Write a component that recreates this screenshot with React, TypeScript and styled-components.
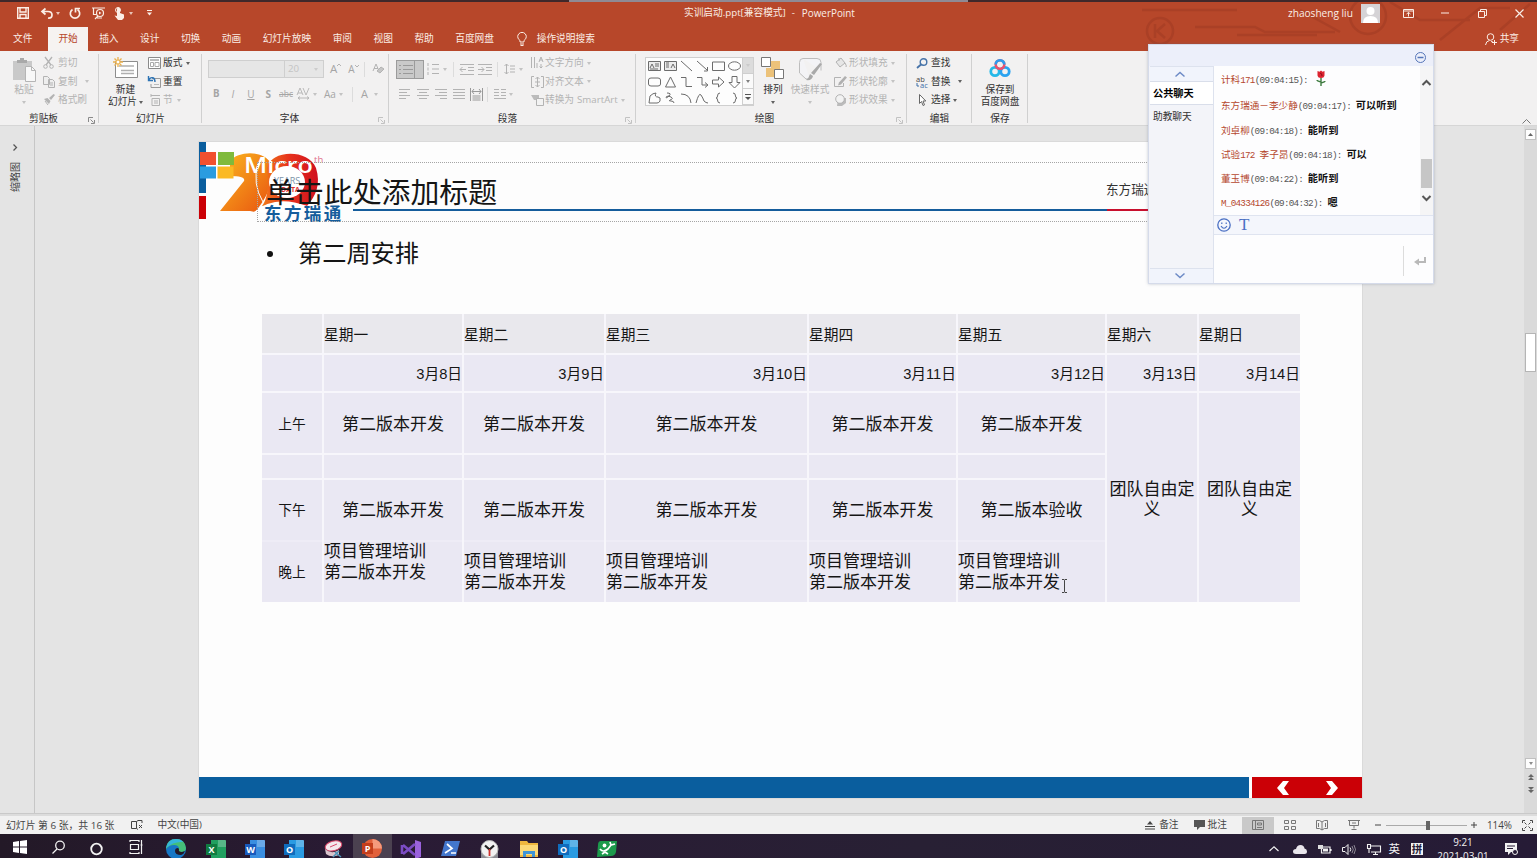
import React from "react";
import styled, { createGlobalStyle, css } from "styled-components";

const UI = `"Open Sans", "Noto Sans CJK SC", sans-serif`;

const Global = createGlobalStyle`
  * { box-sizing: border-box; }
  html, body { margin: 0; padding: 0; overflow: hidden; }
  body { font-family: ${UI}; font-size: 9.7px; color: #262626; }
`;

const Screen = styled.div`
  position: relative;
  display: flex;
  flex-direction: column;
  width: 1537px;
  height: 858px;
  overflow: hidden;
  background: #e4e4e4;
`;

/* ---------- shared bits ---------- */
const Svg = styled.svg<{ $ml?: number }>`
  display: block;
  flex: none;
  margin-left: ${(p) => p.$ml ?? 0}px;
  overflow: visible;
`;

type IconProps = { w: number; h: number; ml?: number; vb?: string; children: React.ReactNode };
const Icon = ({ w, h, ml, vb, children }: IconProps) => (
  <Svg $ml={ml} width={w} height={h} viewBox={vb ?? `0 0 ${w} ${h}`} fill="none" stroke="currentColor" strokeWidth="1">
    {children}
  </Svg>
);

const Caret = styled.i<{ $ml?: number }>`
  flex: none;
  width: 0;
  height: 0;
  margin-left: ${(p) => p.$ml ?? 0}px;
  border: 2.5px solid transparent;
  border-top: 3px solid currentColor;
  border-bottom: 0;
  opacity: 0.75;
`;

const Txt = styled.span<{ $ml?: number; $s?: number; $c?: string }>`
  flex: none;
  white-space: nowrap;
  line-height: 12px;
  margin-left: ${(p) => p.$ml ?? 0}px;
  ${(p) => p.$s && css`font-size: ${p.$s}px;`}
  ${(p) => p.$c && css`color: ${p.$c};`}
`;

const Spring = styled.i<{ $w?: number }>`
  flex: ${(p) => (p.$w ? "none" : "1")};
  width: ${(p) => p.$w ?? 0}px;
`;

/* ---------- title bar ---------- */
const Header = styled.header`
  position: relative;
  flex: none;
  height: 51px;
  background: #b7472a;
  color: #fbeee6;
`;
const TopStrip = styled.div`
  display: flex;
  height: 2px;
  background: #40282a;
  padding-left: 569px;
`;
const StripHandle = styled.div`
  width: 399px;
  height: 2px;
  background: #8f8a94;
`;
const Circuit = styled.svg`
  position: absolute;
  right: 0;
  top: 2px;
`;
const TitleRow = styled.div`
  position: relative;
  display: flex;
  align-items: center;
  height: 22px;
  padding-left: 17px;
`;
const DocTitle = styled.div`
  display: flex;
  width: 174px;
  margin-left: 532px;
  white-space: nowrap;
  line-height: 12px;
  font-size: 9.7px;
`;
const Avatar = styled.div`
  flex: none;
  width: 19px;
  height: 19px;
  margin-left: 8px;
  background: #d5d3d6;
  overflow: hidden;
`;
const TabRow = styled.nav`
  position: relative;
  display: flex;
  align-items: center;
  height: 27px;
  padding-top: 3px;
`;
const Tab = styled.div<{ $active?: boolean; $file?: boolean }>`
  height: 24px;
  line-height: 24px;
  white-space: nowrap;
  padding: 0 10.75px;
  ${(p) => p.$file && css`padding: 0 16px 0 13px;`}
  ${(p) => p.$active && css`background: #f6f3f1; color: #b7472a; padding: 0 10px; margin-right: 0.7px;`}
`;
const Share = styled.div`
  display: flex;
  align-items: center;
  margin-left: auto;
  padding-right: 18px;
`;

/* ---------- ribbon ---------- */
const Ribbon = styled.section`
  flex: none;
  display: flex;
  height: 75px;
  background: #f2f1f1;
  border-bottom: 1px solid #d6d6d6;
  position: relative;
`;
const Group = styled.div<{ $w: number }>`
  position: relative;
  flex: none;
  width: ${(p) => p.$w}px;
  display: flex;
  flex-direction: column;
  padding-top: 3px;
  &::after {
    content: "";
    position: absolute;
    right: 0;
    top: 3px;
    width: 1px;
    height: 69px;
    background: #d0d0d0;
  }
`;
const GroupBody = styled.div<{ $pl: number }>`
  display: flex;
  height: 56px;
  padding-left: ${(p) => p.$pl}px;
`;
const GroupLabel = styled.div<{ $shift?: number }>`
  height: 15px;
  line-height: 17px;
  text-align: center;
  color: #303030;
  padding-right: ${(p) => p.$shift ?? 0}px;
`;
const Launcher = styled.svg`
  position: absolute;
  right: 4px;
  bottom: 1px;
`;
const Rows = styled.div<{ $ml?: number }>`
  display: flex;
  flex-direction: column;
  margin-left: ${(p) => p.$ml ?? 0}px;
`;
const Row = styled.div<{ $h?: number; $off?: boolean }>`
  display: flex;
  align-items: center;
  height: ${(p) => p.$h ?? 18.6}px;
  color: ${(p) => (p.$off ? "#b3b3b3" : "#303030")};
`;
const Big = styled.div<{ $w: number; $off?: boolean; $ml?: number }>`
  display: flex;
  flex-direction: column;
  align-items: center;
  width: ${(p) => p.$w}px;
  margin-left: ${(p) => p.$ml ?? 0}px;
  padding-top: 3px;
  line-height: 12px;
  white-space: nowrap;
  color: ${(p) => (p.$off ? "#b3b3b3" : "#303030")};
`;
const BigIcon = styled.div`
  height: 27px;
`;
const Inline = styled.div`
  display: flex;
  align-items: center;
  height: 12px;
`;
const FontBox = styled.div<{ $w: number }>`
  display: flex;
  align-items: center;
  width: ${(p) => p.$w}px;
  height: 18px;
  border: 1px solid #cfcfcf;
  background: #e6e6e6;
  color: #c4c4c4;
  margin-right: -1px;
`;
const Bar = styled.i<{ $ml: number }>`
  width: 1px;
  height: 15px;
  background: #dcdcdc;
  margin-left: ${(p) => p.$ml}px;
`;
const Glyph = styled.span<{ $ml: number; $s?: number; $w?: number; $i?: boolean; $d?: string }>`
  flex: none;
  color: #a5a5a5;
  line-height: 14px;
  margin-left: ${(p) => p.$ml}px;
  font-size: ${(p) => p.$s ?? 10}px;
  font-weight: ${(p) => p.$w ?? 400};
  font-style: ${(p) => (p.$i ? "italic" : "normal")};
  text-decoration: ${(p) => p.$d ?? "none"};
`;
const Toggle = styled.div<{ $w: number }>`
  display: flex;
  align-items: center;
  justify-content: center;
  width: ${(p) => p.$w}px;
  height: 19px;
  border: 1px solid #9b9b9b;
  background: #c9c9c9;
  color: #9a9a9a;
  margin-right: -1px;
`;
const Gallery = styled.div`
  display: flex;
  width: 109px;
  height: 49px;
  margin-top: 3px;
  border: 1px solid #cfcfcf;
  background: #fdfdfd;
`;
const Shapes = styled.div`
  display: grid;
  grid-template-columns: repeat(6, 16px);
  grid-template-rows: repeat(3, 16px);
  width: 96px;
  place-items: center;
  color: #6c6c6c;
`;
const GalleryNav = styled.div`
  display: flex;
  flex-direction: column;
  width: 12px;
`;
const NavCell = styled.div<{ $off?: boolean }>`
  flex: 1;
  display: flex;
  align-items: center;
  justify-content: center;
  border-left: 1px solid #cfcfcf;
  border-bottom: 1px solid #cfcfcf;
  background: ${(p) => (p.$off ? "#dcdcdc" : "#fafafa")};
  color: ${(p) => (p.$off ? "#c6c6c6" : "#555")};
`;
const Collapse = styled.div`
  margin: auto 6px 1px auto;
  color: #777;
`;

/* ---------- workspace ---------- */
const Work = styled.main`
  flex: none;
  display: flex;
  height: 688px;
  background: #e4e4e4;
  border-bottom: 1px solid #c9c9c9;
`;
const SidePane = styled.aside`
  display: flex;
  flex-direction: column;
  align-items: center;
  width: 35px;
  padding: 18px 4px 0 0;
  border-right: 1px solid #c6c6c6;
  color: #555;
`;
const SideText = styled.div`
  writing-mode: vertical-rl;
  text-orientation: sideways;
  transform: rotate(180deg);
  margin-top: 11px;
  line-height: 12px;
  font-size: 10px;
  color: #444;
`;
const Stage = styled.div`
  flex: 1;
  padding: 16px 0 0 164px;
`;
const Slide = styled.article`
  position: relative;
  width: 1163px;
  height: 656px;
  background: #fdfdfd;
  box-shadow: 0 0 0 1px #dadada;
  color: #151515;
  display: flex;
  flex-direction: column;
`;
const Logo = styled.svg`
  position: absolute;
  left: 0;
  top: 0;
`;
const TitleBox = styled.div`
  position: absolute;
  left: 58px;
  top: 20px;
  width: 1036px;
  height: 60px;
  border: 1px dotted #a5a5a5;
  padding-left: 8px;
  line-height: 58px;
  font-size: 28.9px;
  white-space: nowrap;
`;
const Rule = styled.div`
  position: absolute;
  left: 154px;
  top: 67px;
  width: 1008px;
  height: 2px;
  background: linear-gradient(90deg, #155d9c 0 754px, #c8102e 754px);
`;
const Brand = styled.div`
  position: absolute;
  left: 907px;
  top: 38px;
  font-size: 12.6px;
  line-height: 20px;
  color: #333;
`;
const Bullet = styled.div`
  display: flex;
  align-items: center;
  height: 34px;
  margin: 94px 0 0 67px;
  font-size: 24.2px;
  line-height: 34px;
`;
const Dot = styled.i`
  width: 6px;
  height: 6px;
  border-radius: 50%;
  background: #111;
  margin: 2px 25px 0 1px;
`;
const Table = styled.div`
  display: grid;
  grid-template-columns: 60px 138px 140px 201px 147px 147px 90px 101px;
  grid-template-rows: 39px 36px 60px 23px 60px 60px;
  gap: 2px;
  width: 1038px;
  margin: 44px 0 0 63px;
  background: #f7f6fb;
`;
type Align = "left" | "right" | "center";
const Cell = styled.div<{ $a?: Align; $s?: number; $tall?: boolean; $head?: boolean; $up?: boolean; $pt?: number; $faint?: boolean }>`
  display: flex;
  flex-direction: column;
  justify-content: center;
  text-align: ${(p) => p.$a ?? "center"};
  font-family: "Liberation Sans", "Noto Sans CJK SC", sans-serif;
  font-size: ${(p) => p.$s ?? 17}px;
  line-height: 21px;
  white-space: nowrap;
  padding-top: ${(p) => p.$pt ?? 2}px;
  background: ${(p) => (p.$head ? "#e9e8ed" : "#eae8f3")};
  ${(p) => p.$tall && css`grid-row: span 4; line-height: 20px;`}
  ${(p) => p.$up && css`padding-bottom: 21px;`}
  ${(p) => p.$faint && css`box-shadow: 0 -2px 0 #eeecf6;`}
`;
const Footer = styled.div`
  display: flex;
  gap: 3px;
  height: 21px;
  margin-top: auto;
`;
const FooterBlue = styled.div`
  width: 1050px;
  background: #0a5e9e;
`;
const FooterRed = styled.div`
  flex: 1;
  display: flex;
  align-items: center;
  background: #cb0006;
  color: #fff;
`;
const VScroll = styled.div`
  display: flex;
  flex-direction: column;
  align-items: center;
  width: 13px;
  padding-top: 3px;
  background: #dadada;
`;
const ScrollBtn = styled.div`
  display: flex;
  align-items: center;
  justify-content: center;
  width: 11px;
  height: 11px;
  flex: none;
  background: #fdfdfd;
  border: 1px solid #c0c0c0;
  color: #666;
`;
const ScrollThumb = styled.div`
  width: 11px;
  height: 39px;
  margin: 193px 0 auto;
  background: #fff;
  border: 1px solid #b5b5b5;
`;

/* ---------- status bar ---------- */
const Status = styled.footer`
  flex: none;
  display: flex;
  align-items: center;
  height: 20px;
  padding-left: 6px;
  background: #f1f1f1;
  border-top: 2px solid #dcdcdc;
  color: #444;
`;
const ViewBtn = styled.div<{ $on?: boolean }>`
  display: flex;
  align-items: center;
  justify-content: center;
  width: 32px;
  height: 17px;
  color: #777;
  background: ${(p) => (p.$on ? "#c9c9c9" : "transparent")};
`;
const Slider = styled.div`
  display: flex;
  align-items: center;
  justify-content: center;
  width: 81px;
  height: 10px;
  margin: 0 4px 0 5px;
  padding-left: 4px;
  background: linear-gradient(#aaa, #aaa) center / 100% 1px no-repeat;
`;
const Knob = styled.i`
  width: 4px;
  height: 9px;
  background: #666;
`;

/* ---------- taskbar ---------- */
const Taskbar = styled.footer`
  flex: none;
  display: flex;
  height: 24px;
  overflow: hidden;
  background: linear-gradient(90deg, #231927, #2a1b35 25%, #282034 60%, #261b36);
  color: #f2f2f2;
`;
const TaskItem = styled.div<{ $on?: boolean; $top?: number }>`
  display: flex;
  align-items: flex-start;
  justify-content: center;
  flex: none;
  width: 39.2px;
  height: 24px;
  padding-top: ${(p) => p.$top ?? 6}px;
  background: ${(p) => (p.$on ? "#4b4150" : "transparent")};
`;
const Tray = styled.div`
  display: flex;
  align-items: center;
  height: 30px;
  margin-left: auto;
`;
const Clock = styled.div`
  width: 64px;
  margin-left: 8px;
  text-align: center;
  font-size: 9.9px;
  line-height: 14px;
`;

/* ---------- chat window ---------- */
const Chat = styled.section`
  position: absolute;
  left: 1148px;
  top: 44px;
  width: 286px;
  height: 240px;
  display: flex;
  flex-direction: column;
  background: #f1f3fb;
  border: 1px solid #d5dbea;
  box-shadow: 0 0 3px rgba(90, 100, 130, 0.35);
`;
const ChatHead = styled.div`
  display: flex;
  align-items: center;
  justify-content: flex-end;
  height: 21px;
  padding: 3px 7px 0 0;
  background: #eceffa;
  color: #5575b8;
`;
const ChatMain = styled.div`
  display: flex;
  flex: 1;
`;
const ChatSide = styled.div`
  display: flex;
  flex-direction: column;
  width: 64px;
  padding-left: 1px;
  background: #f3f4f9;
  color: #222;
`;
const SideArrow = styled.div<{ $end?: boolean }>`
  display: flex;
  align-items: center;
  justify-content: center;
  height: 15px;
  padding-right: 3px;
  color: #6d8ac6;
  background: #f1f4fc;
  border-top: 1px solid #dde2ee;
  ${(p) => p.$end && css`margin-top: auto; padding-bottom: 2px;`}
`;
const SideTab = styled.div<{ $on?: boolean }>`
  height: 24px;
  line-height: 22px;
  padding-left: 3px;
  font-size: ${(p) => (p.$on ? 10.2 : 9.7)}px;
  font-weight: ${(p) => (p.$on ? 700 : 400)};
  color: ${(p) => (p.$on ? "#000" : "#333")};
  background: ${(p) => (p.$on ? "#fff" : "transparent")};
  border-top: 1px solid ${(p) => (p.$on ? "#d9deea" : "transparent")};
  border-bottom: 1px solid ${(p) => (p.$on ? "#d9deea" : "transparent")};
`;
const ChatPane = styled.div`
  display: flex;
  flex-direction: column;
  flex: 1;
  border-left: 1px solid #dde2ee;
  background: #fdfdfe;
`;
const Log = styled.div`
  display: flex;
  height: 149px;
`;
const Lines = styled.div`
  flex: 1;
  padding: 0.6px 0 0 7px;
`;
const Line = styled.div<{ $h: number }>`
  display: flex;
  align-items: center;
  height: ${(p) => p.$h}px;
  white-space: nowrap;
`;
const Run = styled.span<{ $cjk?: boolean; $c: string; $b?: boolean }>`
  white-space: pre;
  line-height: 12px;
  color: ${(p) => p.$c};
  font-family: "Liberation Mono", "Noto Sans CJK SC", monospace;
  font-size: ${(p) => (p.$b ? 10.2 : p.$cjk ? 9.6 : 9.3)}px;
  letter-spacing: ${(p) => (p.$b || p.$cjk ? 0 : -0.74)}px;
  font-weight: ${(p) => (p.$b ? 700 : 400)};
`;
const LogScroll = styled.div`
  display: flex;
  flex-direction: column;
  align-items: center;
  width: 13px;
  padding-top: 14px;
  background: #f5f5f6;
  color: #555;
`;
const LogThumb = styled.div`
  width: 11px;
  height: 29px;
  margin: 73px 0 7px;
  background: #c6c6c6;
`;
const Tools = styled.div`
  display: flex;
  align-items: center;
  height: 20px;
  padding-left: 3px;
  background: #f4f6fc;
  border-top: 1px solid #dfe4f0;
  border-bottom: 1px solid #dfe4f0;
  color: #4a6fc3;
`;
const BigT = styled.span`
  font-family: "Liberation Serif", serif;
  font-size: 17px;
  line-height: 18px;
  margin-left: 8px;
`;
const Input = styled.div`
  display: flex;
  align-items: center;
  justify-content: flex-end;
  flex: 1;
  padding: 4px 7px 0 0;
  color: #b9b9b9;
`;
const InputBar = styled.i`
  width: 1px;
  height: 30px;
  background: #dcdcdc;
  margin-right: 10px;
`;

const chunks = (s: string) => s.match(/[\x20-\x7e]+|[^\x20-\x7e]+/g) ?? [];
const Runs = ({ text, color }: { text: string; color: string }) => (
  <>
    {chunks(text).map((t, i) => (
      <Run key={i} $c={color} $cjk={!/^[\x20-\x7e]/.test(t)}>{t}</Run>
    ))}
  </>
);

const Launch = ({ c = "#8a8a8a" }: { c?: string }) => (
  <Launcher width="7" height="7" viewBox="0 0 7 7" fill="none" stroke={c}>
    <path d="M.5 5V.5H5M2.5 2.5l3 3M6.5 3v3.5H3" />
  </Launcher>
);

const Clipboard = () => (
  <Group $w={99}>
    <GroupBody $pl={12}>
      <Big $w={24} $off>
        <BigIcon>
          <Icon w={24} h={25}>
            <path d="M1 4h19v19H1z" fill="#c9c9c9" stroke="none" />
            <path d="M5 6V3h3V1h4v2h3v3z" fill="#a9a9a9" stroke="none" />
            <path d="M13.500 9.500h6l4 4v11h-10z" fill="#f8f8f8" stroke="#b5b5b5" />
            <path d="M19.500 9.500v4h4" stroke="#b5b5b5" />
          </Icon>
        </BigIcon>
        粘贴
        <Inline><Caret /></Inline>
      </Big>
      <Rows $ml={7}>
        <Row $off>
          <Icon w={11} h={12}><path d="M2 0l6 8M9 0L3 8" strokeWidth="1.300" /><circle cx="2.500" cy="9.500" r="1.800" /><circle cx="8.500" cy="9.500" r="1.800" /></Icon>
          <Txt $ml={4}>剪切</Txt>
        </Row>
        <Row $off>
          <Icon w={12} h={12}><path d="M.5.5h4l2 2v6h-6zM5.500 3.500h4l2 2v6h-6zM7 7h3M7 9h3" fill="#eee" /></Icon>
          <Txt $ml={3}>复制</Txt><Caret $ml={8} />
        </Row>
        <Row $off>
          <Icon w={12} h={12}><path d="M1 5l5 5 1.500-3-3-3zM6 4l2 2 4-5-1.500-1z" fill="currentColor" stroke="none" /><path d="M2 7l3 4" /></Icon>
          <Txt $ml={3}>格式刷</Txt>
        </Row>
      </Rows>
    </GroupBody>
    <GroupLabel $shift={12}>剪贴板</GroupLabel>
    <Launch />
  </Group>
);

const Slides = () => (
  <Group $w={103}>
    <GroupBody $pl={8}>
      <Big $w={37}>
        <BigIcon>
          <Icon w={25} h={22}>
            <path d="M2.500 4.500h22v16h-22z" fill="#fff" stroke="#8d8d8d" />
            <path d="M6 9h15M8 13.500h13M8 16.500h13" stroke="#b0b0b0" strokeWidth="1.500" />
            <path d="M5 0v10M0 5h10M1.500 1.500l7 7M8.500 1.500l-7 7" stroke="#eab04d" strokeWidth="1.300" />
            <circle cx="5" cy="5" r="2" fill="#fff" stroke="#eab04d" />
          </Icon>
        </BigIcon>
        新建
        <Inline>幻灯片<Caret $ml={2} /></Inline>
      </Big>
      <Rows $ml={4}>
        <Row>
          <Icon w={13} h={12}><path d="M.5.5h12v11H.5z" fill="#fff" stroke="#8a8a8a" /><path d="M2 3h9" stroke="#777" /><path d="M2.500 5.500h3v4h-3zM7 5.500h4v4H7z" stroke="#aaa" /></Icon>
          <Txt $ml={2}>版式</Txt><Caret $ml={4} />
        </Row>
        <Row>
          <Icon w={13} h={12}><path d="M4 2.500h8.500v9H3V8" stroke="#999" /><path d="M6 8.500h5" stroke="#bbb" /><path d="M1 3.500C3 .5 7 1 7 6M.5 0v4.500H5" stroke="#2e74b5" strokeWidth="1.400" /></Icon>
          <Txt $ml={2}>重置</Txt>
        </Row>
        <Row $off>
          <Icon w={13} h={12}><path d="M4 4.500h7.500v7H4zM6 7h4M6 9h4M3 1.500h9M3 0v3" /></Icon>
          <Txt $ml={2}>节</Txt><Caret $ml={4} />
        </Row>
      </Rows>
    </GroupBody>
    <GroupLabel>幻灯片</GroupLabel>
  </Group>
);

const FontGroup = () => (
  <Group $w={187}>
    <GroupBody $pl={6}>
      <Rows>
        <Row $h={30} $off>
          <FontBox $w={77} />
          <FontBox $w={40}><Txt $ml={3}>20</Txt><Caret $ml={15} /></FontBox>
          <Glyph $ml={7} $s={11.500}>A</Glyph>
          <Icon w={4} h={10}><path d="M0 2L2 0L4 2" /></Icon>
          <Glyph $ml={7} $s={10}>A</Glyph>
          <Icon w={4} h={10}><path d="M0 1L2 3L4 1" /></Icon>
          <Bar $ml={5} />
          <Icon w={12} h={12} ml={7}><path d="M1 8l3-7 3 7M2 5.500h4" /><path d="M5 8l4-4 3 2-4 4z" fill="#c6c6c6" /></Icon>
        </Row>
        <Row $h={20} $off>
          <Glyph $ml={5} $w={700} $s={9.700}>B</Glyph>
          <Glyph $ml={12} $i>I</Glyph>
          <Glyph $ml={13} $d="underline">U</Glyph>
          <Glyph $ml={11} $w={700}>S</Glyph>
          <Glyph $ml={8} $s={8.500} $d="line-through">abc</Glyph>
          <Icon w={13} h={12} ml={4}><path d="M0 7L3 0L6 7M1 5h4M6 0l3 7 3-7M1 10h11M3 8.500L1 10l2 1.500M10 8.500l2 1.500-2 1.500" strokeWidth=".9" /></Icon>
          <Caret $ml={3} />
          <Glyph $ml={7} $s={10}>Aa</Glyph>
          <Caret $ml={3} />
          <Bar $ml={9} />
          <Glyph $ml={8} $s={11}>A</Glyph>
          <Caret $ml={6} />
        </Row>
      </Rows>
    </GroupBody>
    <GroupLabel $shift={12}>字体</GroupLabel>
    <Launch c="#c2c2c2" />
  </Group>
);

const AlignIcon = ({ ml, d }: { ml: number; d: string }) => (
  <Icon w={12} h={10} ml={ml}><path d={d} /></Icon>
);

const Paragraph = () => (
  <Group $w={247}>
    <GroupBody $pl={7}>
      <Rows>
        <Row $h={30} $off>
          <Toggle $w={19}><Icon w={14} h={11}><path d="M0 1.500h2M4 1.500h10M0 5.500h2M4 5.500h10M0 9.500h2M4 9.500h10" stroke="#999" /></Icon></Toggle>
          <Toggle $w={10} />
          <Icon w={13} h={12} ml={4}><path d="M1 0v3M1 4.500v3M1 9v3M5 1.500h7M5 6h7M5 10.500h7" /></Icon>
          <Caret $ml={3} />
          <Bar $ml={6} />
          <Icon w={14} h={11} ml={6}><path d="M0 .5h14M8 3.500h6M8 6.500h6M0 10.500h14M0 5.500h6M2.500 3L0 5.500L2.500 8" /></Icon>
          <Icon w={14} h={11} ml={4}><path d="M0 .5h14M8 3.500h6M8 6.500h6M0 10.500h14M0 5.500h6M3.500 3L6 5.500L3.500 8" /></Icon>
          <Bar $ml={5} />
          <Icon w={12} h={12} ml={6}><path d="M2.500 1v10M.5 3l2-2 2 2M.5 9l2 2 2-2M6 3h5M6 6h5M6 9h5" /></Icon>
          <Caret $ml={3} />
        </Row>
        <Row $h={20} $off>
          <AlignIcon ml={3} d="M0 .5h11M0 3.500h8M0 6.500h11M0 9.500h7" />
          <AlignIcon ml={6} d="M0 .5h12M2 3.500h8M0 6.500h12M2 9.500h8" />
          <AlignIcon ml={6} d="M0 .5h12M4 3.500h8M0 6.500h12M5 9.500h7" />
          <AlignIcon ml={6} d="M0 .5h12M0 3.500h12M0 6.500h12M0 9.500h12" />
          <Icon w={13} h={13} ml={5}><path d="M.5 0v13M12.500 0v13M2 3.500h9M4 1L2 3.500L4 6M9 1l2 2.500L9 6M2.500 8h8M2.500 10h8M2.500 12h8" stroke="#999" /></Icon>
          <Bar $ml={4} />
          <Icon w={12} h={10} ml={6}><path d="M0 .5h5M7 .5h5M0 3.500h5M7 3.500h5M0 6.500h5M7 6.500h5M0 9.500h12" /></Icon>
          <Caret $ml={3} />
        </Row>
      </Rows>
      <Rows $ml={8}>
        <Row $off>
          <Icon w={13} h={12}><path d="M.5 0v11M3.500 0v11M6 11V6M8 5l2-5 2 5M8.500 3h3M10 7v4M8.500 9.500L10 11l1.500-1.500" /></Icon>
          <Txt $ml={1}>文字方向</Txt><Caret $ml={3} />
        </Row>
        <Row $off>
          <Icon w={13} h={12}><path d="M3 .5H.5v11H3M10 .5h2.500v11H10M6.500 1v10M4.500 3l2-2 2 2M4.500 9l2 2 2-2M4 6h5" /></Icon>
          <Txt $ml={1}>对齐文本</Txt><Caret $ml={3} />
        </Row>
        <Row $off>
          <Icon w={13} h={12}><path d="M0 1h8v5H3z" fill="#bbb" stroke="none" /><path d="M5.500 4.500h7v7h-7z" fill="#f2f2f2" /></Icon>
          <Txt $ml={1}>转换为</Txt><Txt $ml={3} $s={9.700}>SmartArt</Txt><Caret $ml={3} />
        </Row>
      </Rows>
    </GroupBody>
    <GroupLabel $shift={10}>段落</GroupLabel>
    <Launch c="#c2c2c2" />
  </Group>
);

const shapePaths = [
  "M.5 1.500h12v9H.5zM2 8l2-4 2 4M7 4h4M7 6h4M2 9h8",
  "M.5 1.500h12v9H.5zM7 8l2-4 2 4M2 3h3M2 5h3M2 7h3",
  "M1 1l11 10",
  "M1 1l10 9M11.500 7v4H8",
  "M.5 2h12v8.500H.5z",
  "M.5 6a6 4.200 0 1 0 12 0a6 4.200 0 1 0-12 0z",
  "M3 2h7q2.500 0 2.500 2v4q0 2-2.500 2H3q-2.500 0-2.500-2V4q0-2 2.500-2z",
  "M6.500 1l5 10h-10z",
  "M1 1.500h5v9h6",
  "M1 1.500h5v7.500h5M9 6.500l3 2.500-3 2.500",
  "M.5 4h6V1L12 6l-5.500 5V8h-6z",
  "M4 .5h5v6h3L6.500 12L1 6.500h3z",
  "M2 4Q5 1 8 1q-2 4 2 4 3 0 2 4-1 2-3 2H1z",
  "M3 1q5 0 2 3t-3 1q2-2 5 0t-1 3q-2 1 1 1t3 2",
  "M1 2q9 0 10 9",
  "M0 11Q3 0 5 3t3 6q2 2 4 2",
  "M8 1Q5.500 1 5.500 4q0 2-1.500 2 1.500 0 1.500 2 0 3 2.500 3",
  "M5 1q2.500 0 2.500 3 0 2 1.500 2-1.500 0-1.500 2 0 3-2.500 3",
];

const Drawing = () => (
  <Group $w={271}>
    <GroupBody $pl={9}>
      <Gallery>
        <Shapes>
          {shapePaths.map((d, i) => (
            <Icon key={i} w={13} h={12}><path d={d} fill={i < 2 ? "#ececec" : "none"} /></Icon>
          ))}
        </Shapes>
        <GalleryNav>
          <NavCell $off><Caret /></NavCell>
          <NavCell><Caret /></NavCell>
          <NavCell><Icon w={6} h={6}><path d="M0 .5h6" /><path d="M0 3h6L3 6z" fill="currentColor" stroke="none" /></Icon></NavCell>
        </GalleryNav>
      </Gallery>
      <Big $w={24} $ml={7}>
        <BigIcon>
          <Icon w={24} h={24}>
            <path d="M10 4h9v9h-9zM5 11h9v9H5z" fill="#ecc27a" stroke="none" />
            <path d="M.5.5h9v9h-9zM13.500 12.500h9v9h-9z" fill="#fff" stroke="#777" />
          </Icon>
        </BigIcon>
        排列
        <Inline><Caret /></Inline>
      </Big>
      <Big $w={40} $ml={5} $off>
        <BigIcon>
          <Icon w={24} h={25}>
            <path d="M5 1.500h14q4 0 4 4v8M12 22H8L1.500 16V5.500q0-4 3.500-4" fill="#f3f3f6" stroke="#bdbdbd" />
            <path d="M22 6l2 1-8 11-3-2zM12 17l3 2q-1 5-7 4 3-2 4-6z" fill="#a9a9a9" stroke="none" />
          </Icon>
        </BigIcon>
        快速样式
        <Inline><Caret /></Inline>
      </Big>
      <Rows $ml={4}>
        <Row $off>
          <Icon w={13} h={12}><path d="M2 5l5-4 4 5-5 4zM5 4V1M11 6q2 3 1 4" fill="#e6e6e6" /></Icon>
          <Txt $ml={2}>形状填充</Txt><Caret $ml={3} />
        </Row>
        <Row $off>
          <Icon w={13} h={12}><path d="M7 1.500H.5v9h9V7" /><path d="M11 0l2 1.500-6 7-3 1 1-3z" fill="#b0b0b0" stroke="none" /></Icon>
          <Txt $ml={2}>形状轮廓</Txt><Caret $ml={3} />
        </Row>
        <Row $off>
          <Icon w={13} h={12}><path d="M4 4l8 0v5l-4 3H3z" fill="#bbb" stroke="none" /><circle cx="6" cy="5" r="4.300" fill="#f2f2f2" /></Icon>
          <Txt $ml={2}>形状效果</Txt><Caret $ml={3} />
        </Row>
      </Rows>
    </GroupBody>
    <GroupLabel $shift={14}>绘图</GroupLabel>
    <Launch c="#c2c2c2" />
  </Group>
);

const Editing = () => (
  <Group $w={65}>
    <GroupBody $pl={9}>
      <Rows>
        <Row>
          <Icon w={12} h={11}><circle cx="7.500" cy="4" r="3.300" stroke="#4673a8" strokeWidth="1.400" /><path d="M5 6.500L1 10" stroke="#4673a8" strokeWidth="1.800" /></Icon>
          <Txt $ml={3}>查找</Txt>
        </Row>
        <Row>
          <Icon w={12} h={12}>
            <text x="0" y="5.500" fontSize="7.500" fill="#444" stroke="none" fontFamily="Open Sans">ab</text>
            <text x="4" y="12" fontSize="7.500" fill="#3c6ea8" stroke="none" fontFamily="Open Sans">ac</text>
            <path d="M1 7v3h2" stroke="#3c6ea8" />
          </Icon>
          <Txt $ml={3}>替换</Txt><Caret $ml={8} />
        </Row>
        <Row>
          <Icon w={12} h={12}><path d="M3.500.5v9l2-2 1.500 4 1.500-.6L7 7h2.800z" fill="#fff" stroke="#666" /></Icon>
          <Txt $ml={3}>选择</Txt><Caret $ml={3} />
        </Row>
      </Rows>
    </GroupBody>
    <GroupLabel>编辑</GroupLabel>
  </Group>
);

const SaveGroup = () => (
  <Group $w={56}>
    <GroupBody $pl={7}>
      <Big $w={42}>
        <BigIcon>
          <Icon w={22} h={20} vb="0 -3 22 20">
            <circle cx="6" cy="11.500" r="4.200" stroke="#25b9e8" strokeWidth="2.800" />
            <circle cx="16" cy="11.500" r="4.200" stroke="#2ba3f0" strokeWidth="2.800" />
            <circle cx="11" cy="4.500" r="4.300" stroke="#f0506c" strokeWidth="2.600" />
            <path d="M6.700 4.500a4.300 4.300 0 0 1 8.600 0" stroke="#2c9df0" strokeWidth="2.600" />
          </Icon>
        </BigIcon>
        保存到
        <Inline>百度网盘</Inline>
      </Big>
    </GroupBody>
    <GroupLabel>保存</GroupLabel>
  </Group>
);

const SlideLogo = () => (
  <Logo width="165" height="84" viewBox="199 142 165 84">
    <defs>
      <linearGradient id="two" x1="0" x2="1" y1="0" y2="1">
        <stop offset="0" stopColor="#fbb81f" />
        <stop offset="1" stopColor="#e8520f" />
      </linearGradient>
      <linearGradient id="zero" x1="0" x2="1">
        <stop offset="0" stopColor="#f07a1a" />
        <stop offset=".5" stopColor="#e6301c" />
        <stop offset="1" stopColor="#d0101f" />
      </linearGradient>
    </defs>
    <path d="M199 142h7v51h-7z" fill="#0a5e9e" />
    <path d="M199 196h7v23h-7z" fill="#cb0006" />
    <path d="M230 161C238 151 262 150 270 162Q277 186 255 212L250 211H220L244 181Q246 176 230 176z" fill="url(#two)" />
    <path d="M267 168C270 150 308 148 316 168C321 184 316 196 307 206Q285 201 262 206Q270 196 267 168z" fill="url(#zero)" />
    <ellipse cx="287" cy="182" rx="18" ry="16" fill="#fff" />
    <path d="M254 212Q275 194 307 206L304 212z" fill="#fff" />
    <path d="M258 163Q252 184 263 202" stroke="#fff" fill="none" />
    <path d="M200 152h16v13h-16z" fill="#f1502f" />
    <path d="M218 152h16v13h-16z" fill="#7fba3c" />
    <path d="M200 166.500h16v12h-16z" fill="#2a9ce0" />
    <path d="M217.500 166.500h16v12h-16z" fill="#fbb924" />
    <text x="244" y="173" fontSize="21" textLength="69" lengthAdjust="spacingAndGlyphs" fill="#fff" fontFamily="Open Sans" fontWeight="600">Micro</text>
    <text x="314" y="163" fontSize="9.500" fill="#e0708c" fontFamily="Open Sans">th</text>
    <text x="274" y="184" fontSize="9" fill="#7b93a8" fontFamily="Open Sans">YEARS</text>
    <text x="281" y="192" fontSize="7" fill="#df3131" fontFamily="Open Sans" fontWeight="700">DATA</text>
    <text x="264" y="220" fontSize="17.500" letterSpacing="2.400" fill="#155d9c" fontFamily="Noto Sans CJK SC" fontWeight="700">东方瑞通</text>
  </Logo>
);

const days = ["一", "二", "三", "四", "五", "六", "日"];
const work = "第二版本开发";

const Schedule = () => (
  <Table>
    <Cell $head />
    {days.map((d) => <Cell key={d} $head $a="left" $s={14.700} $pt={3}>星期{d}</Cell>)}
    <Cell />
    {days.map((d, i) => <Cell key={d} $a="right" $s={14.700}>3月{8 + i}日</Cell>)}
    <Cell $s={13.700}>上午</Cell>
    {[0, 1, 2, 3, 4].map((i) => <Cell key={i}>{work}</Cell>)}
    <Cell $tall $pt={4}><span>团队自由定</span><span>义</span></Cell>
    <Cell $tall $pt={4}><span>团队自由定</span><span>义</span></Cell>
    {[0, 1, 2, 3, 4, 5].map((i) => <Cell key={i} />)}
    <Cell $s={13.700} $pt={0}>下午</Cell>
    {[0, 1, 2, 3, 4].map((i) => <Cell key={i} $pt={0}>{i === 4 ? "第二版本验收" : work}</Cell>)}
    <Cell $s={13.700} $pt={1} $faint>晚上</Cell>
    {[0, 1, 2, 3, 4].map((i) => (
      <Cell key={i} $a="left" $up={i === 0} $pt={0} $faint>
        <span>项目管理培训</span>
        <span>{work}</span>
      </Cell>
    ))}
  </Table>
);

const IBeam = styled.svg`
  position: absolute;
  left: 862px;
  top: 437px;
`;

const messages = [
  { name: "计科171", time: "(09:04:15): ", text: "", h: 28 },
  { name: "东方瑞通－李少静", time: "(09:04:17): ", text: "可以听到", h: 25.5 },
  { name: "刘卓柳", time: "(09:04:18): ", text: "能听到", h: 24 },
  { name: "试验172 李子昂", time: "(09:04:18): ", text: "可以", h: 24 },
  { name: "董玉博", time: "(09:04:22): ", text: "能听到", h: 24 },
  { name: "M_04334126", time: "(09:04:32): ", text: "嗯", h: 23 },
];

const ChatWindow = () => (
  <Chat>
    <ChatHead>
      <Icon w={11} h={11}><circle cx="5.500" cy="5.500" r="5" /><path d="M2.500 5.500h6" strokeWidth="1.500" /></Icon>
    </ChatHead>
    <ChatMain>
      <ChatSide>
        <SideArrow><Icon w={10} h={5}><path d="M.5 4.500L5 .5l4.500 4" strokeWidth="1.500" /></Icon></SideArrow>
        <SideTab $on>公共聊天</SideTab>
        <SideTab>助教聊天</SideTab>
        <SideArrow $end><Icon w={10} h={5}><path d="M.5.5L5 4.500L9.500.5" strokeWidth="1.500" /></Icon></SideArrow>
      </ChatSide>
      <ChatPane>
        <Log>
          <Lines>
            {messages.map((m) => (
              <Line key={m.name} $h={m.h}>
                <Runs text={m.name} color="#b5482f" />
                <Runs text={m.time} color="#555" />
                {m.text ? <Run $c="#111" $b>{m.text}</Run> : (
                  <Icon w={10} h={22} ml={3}>
                    <path d="M5 8v8M5 12q-4-1-4-2M5 13q4-1 4-2" stroke="#3c7a3e" strokeWidth="1.400" />
                    <path d="M1.500 1l2 .7L5 .5l1.500 1.200L8.500 1v4.500Q8 8 5 8T1.500 5.500z" fill="#dc2430" stroke="none" />
                    <path d="M4 3q2 0 2 3" stroke="#8e0c18" />
                  </Icon>
                )}
              </Line>
            ))}
          </Lines>
          <LogScroll>
            <Icon w={9} h={6}><path d="M.5 5L4.500 1l4 4" strokeWidth="2" /></Icon>
            <LogThumb />
            <Icon w={9} h={6}><path d="M.5 1l4 4 4-4" strokeWidth="2" /></Icon>
          </LogScroll>
        </Log>
        <Tools>
          <Icon w={14} h={14}><circle cx="7" cy="7" r="6.200" strokeWidth="1.300" /><path d="M4 8q3 4.500 6 0M4.800 4.500v1.600M9.200 4.500v1.600" strokeWidth="1.200" /></Icon>
          <BigT>T</BigT>
        </Tools>
        <Input>
          <InputBar />
          <Icon w={12} h={10}><path d="M11 1v5H2" strokeWidth="2" /><path d="M5 2.500L0 6l5 3.500z" fill="currentColor" stroke="none" /></Icon>
        </Input>
      </ChatPane>
    </ChatMain>
  </Chat>
);

const Office = ({ c, d, l }: { c: string; d: string; l: string }) => (
  <Icon w={20} h={19}>
    <path d="M5 0h14q1 0 1 1v17H5z" fill={c} stroke="none" />
    <path d="M12 0h7q1 0 1 1v6h-8z" fill="#fff" fillOpacity=".25" stroke="none" />
    <path d="M0 4h11v11H0z" fill={d} stroke="none" />
    <text x="5.500" y="12.800" fontSize="9" fontWeight="700" textAnchor="middle" fill="#fff" stroke="none" fontFamily="Open Sans">{l}</text>
  </Icon>
);

const tabs = ["文件", "开始", "插入", "设计", "切换", "动画", "幻灯片放映", "审阅", "视图", "帮助", "百度网盘"];

export default function App() {
  return (
    <Screen>
      <Global />
      <Header>
        <TopStrip><StripHandle /></TopStrip>
        <Circuit width="400" height="49" viewBox="1137 2 400 49" fill="none" stroke="#a33c24" strokeWidth="2.500" opacity=".6">
          <path d="M1142 10h95M1195 27h60l10 5h70M1237 35h80M1300 10l40 22M1390 2l30 18h50M1440 40l40-32h30M1500 30l30-26" />
          <circle cx="1160" cy="31" r="13" /><path d="M1155 24v14M1165 24l-8 7 8 7" />
          <circle cx="1368" cy="16" r="18" />
        </Circuit>
        <TitleRow>
          <Icon w={12} h={12}><path d="M.7.7h10.600v10.600H.7zM3 1v4h6V1M3 11V7.500h6V11" strokeWidth="1.400" /></Icon>
          <Icon w={12} h={11} ml={12}><path d="M4.500.5L1 3.500l3.500 3M1.500 3.500H7q4 0 4 3.500T7 10" strokeWidth="1.700" /></Icon>
          <Caret $ml={3} />
          <Icon w={12} h={12} ml={9}><path d="M3.500 2.500a4.700 4.700 0 1 0 5 0M6.500 5.500V1.500h4.500" strokeWidth="1.700" /></Icon>
          <Icon w={13} h={12} ml={11}><path d="M0 1h13M1.500 1v6.500h3M6 9l-3 3M5 11h5" strokeWidth="1.200" /><circle cx="8" cy="6" r="3.500" strokeWidth="1.200" /><path d="M7 4.500v3L9.500 6z" fill="currentColor" stroke="none" /></Icon>
          <Icon w={10} h={13} ml={9}><path d="M3 1.500q1.500-2 3 0V6l4 1.500V11l-2 2H4L.5 8.500 3 9z" fill="currentColor" stroke="none" /><circle cx="4" cy="3" r="2.500" /></Icon>
          <Caret $ml={5} />
          <Icon w={5} h={6} ml={14}><path d="M0 .5h5" /><path d="M0 2.500h5L2.500 5.500z" fill="currentColor" stroke="none" /></Icon>
          <DocTitle>实训启动.ppt[兼容模式]<Txt $ml={6}>-</Txt><Txt $ml={7} $s={9.900}>PowerPoint</Txt></DocTitle>
          <Txt $ml={430} $s={10.100}>zhaosheng liu</Txt>
          <Avatar><Icon w={19} h={19}><circle cx="9.500" cy="7" r="4" fill="#fff" stroke="none" /><path d="M2 19q0-7 7.500-7t7.500 7z" fill="#fff" stroke="none" /></Icon></Avatar>
          <Icon w={11} h={9} ml={23}><path d="M.5.5h10v8H.5zM.5 2h10M5.500 7.500v-4M3.500 5l2-1.500 2 1.500" /></Icon>
          <Icon w={8} h={2} ml={27}><path d="M0 1h8" /></Icon>
          <Icon w={9} h={9} ml={29}><path d="M.5 2.500h6v6h-6zM2.500 2V.5h6v6H7" /></Icon>
          <Icon w={9} h={9} ml={28}><path d="M.5.5l8 8M8.500.5l-8 8" strokeWidth="1.200" /></Icon>
        </TitleRow>
        <TabRow>
          {tabs.map((t, i) => <Tab key={t} $file={i === 0} $active={i === 1}>{t}</Tab>)}
          <Icon w={10} h={14} ml={12}><path d="M3 10V8.500Q.7 7 .7 4.700a4.300 4.300 0 0 1 8.600 0Q9.300 7 7 8.500V10zM3 12h4M3.500 13.500h3" /></Icon>
          <Txt $ml={10}>操作说明搜索</Txt>
          <Share>
            <Icon w={12} h={12}><circle cx="5.500" cy="4" r="3.300" /><path d="M.5 12Q1 8 4.500 7.500M6 8.500l2 .5M9.500 7v5M7 9.500h5" /></Icon>
            <Txt $ml={3}>共享</Txt>
          </Share>
        </TabRow>
      </Header>

      <Ribbon>
        <Clipboard />
        <Slides />
        <FontGroup />
        <Paragraph />
        <Drawing />
        <Editing />
        <SaveGroup />
        <Collapse><Icon w={9} h={5}><path d="M.5 4.500l4-4 4 4" /></Icon></Collapse>
      </Ribbon>

      <Work>
        <SidePane>
          <Icon w={4} h={7}><path d="M.5.5l3 3-3 3" strokeWidth="1.300" /></Icon>
          <SideText>缩略图</SideText>
        </SidePane>
        <Stage>
          <Slide>
            <SlideLogo />
            <Rule />
            <Brand>东方瑞通</Brand>
            <TitleBox>单击此处添加标题</TitleBox>
            <Bullet><Dot />第二周安排</Bullet>
            <Schedule />
            <IBeam width="7" height="14" viewBox="0 0 7 14" fill="none" stroke="#444"><path d="M1 .5h2l.5 1 .5-1h2M3.500 1.500v11M1 13.500h2l.5-1 .5 1h2" /></IBeam>
            <Footer>
              <FooterBlue />
              <FooterRed>
                <Icon w={12} h={14} ml={25}><path d="M6 0h6L7 7l5 7H6L0 7z" fill="#fff" stroke="none" /></Icon>
                <Icon w={12} h={14} ml={37}><path d="M6 0H0l5 7-5 7h6l6-7z" fill="#fff" stroke="none" /></Icon>
              </FooterRed>
            </Footer>
          </Slide>
        </Stage>
        <VScroll>
          <ScrollBtn><Icon w={5} h={3}><path d="M0 3h5L2.500 0z" fill="currentColor" stroke="none" /></Icon></ScrollBtn>
          <ScrollThumb />
          <ScrollBtn><Caret /></ScrollBtn>
          <Icon w={6} h={26} vb="0 0 6 26"><path d="M3 5l3 3H0zM3 8l3 3H0zM0 18h6l-3 3zM0 21h6l-3 3z" fill="#666" stroke="none" /></Icon>
          <Svg width="1" height="18" />
        </VScroll>
      </Work>

      <Status>
        <Txt $s={9.850}>幻灯片 第 6 张，共 16 张</Txt>
        <Icon w={12} h={10} ml={17}><path d="M5.500 1.500H.5v7h5zM5.500 1.500L7 .5h4V3M5.500 8.500L7 9.500M8 5l3 3M11 5L8 8" /></Icon>
        <Txt $ml={14}>中文(中国)</Txt>
        <Spring />
        <Icon w={10} h={9}><path d="M0 5.500h10M0 8h10" /><path d="M5 0l3 3.500H2z" fill="currentColor" stroke="none" /></Icon>
        <Txt $ml={4}>备注</Txt>
        <Icon w={11} h={10} ml={15}><path d="M0 0h11v7H6l-3 3V7H0z" fill="#555" stroke="none" /></Icon>
        <Txt $ml={3}>批注</Txt>
        <Spring $w={15} />
        <ViewBtn $on><Icon w={12} h={10}><path d="M.5.5h11v9H.5zM3.500.5v9M5.500 3h4v2h-4zM5 7.500h5" /></Icon></ViewBtn>
        <ViewBtn><Icon w={12} h={10}><path d="M.5.5h4v3h-4zM7.500.5h4v3h-4zM.5 6.500h4v3h-4zM7.500 6.500h4v3h-4z" /></Icon></ViewBtn>
        <ViewBtn><Icon w={12} h={10}><path d="M.5.5h3L6 2l2.500-1.500h3v8h-3L6 10 3.500 8.500h-3zM6 2v8M2.500 3v4M9.500 3v4" /></Icon></ViewBtn>
        <ViewBtn><Icon w={12} h={10}><path d="M0 .5h12M1.500.5v5h9v-5M6 5.500v3M3.500 9.500h5M4 3h4" /></Icon></ViewBtn>
        <Icon w={6} h={6} ml={5}><path d="M0 3h6" /></Icon>
        <Slider><Knob /></Slider>
        <Icon w={6} h={6}><path d="M0 3h6M3 0v6" /></Icon>
        <Txt $ml={10} $s={9.900}>114%</Txt>
        <Icon w={11} h={11} ml={10}><path d="M.5 3V.5H3M8 .5h2.500V3M10.500 8v2.500H8M3 10.500H.5V8" /><path d="M2.500 2.500l2 2M8.500 2.500l-2 2M2.500 8.500l2-2M8.500 8.500l-2-2" /></Icon>
        <Spring $w={4} />
      </Status>

      <Taskbar>
        <TaskItem><Icon w={14} h={14}><path d="M0 2l6-1v5.500H0zM7 .9L14 0v6.500H7zM0 7.500h6V13l-6-1zM7 7.500h7V14l-7-1z" fill="#fff" stroke="none" /></Icon></TaskItem>
        <TaskItem><Icon w={13} h={14}><circle cx="8" cy="5.500" r="4.300" strokeWidth="1.300" /><path d="M5 9L.5 13.500" strokeWidth="1.300" /></Icon></TaskItem>
        <TaskItem><Icon w={13} h={18}><circle cx="5.500" cy="9" r="5.300" strokeWidth="1.800" /></Icon></TaskItem>
        <TaskItem><Icon w={14} h={14}><path d="M0 2V.5h9V2M.5 4.500h8v5h-8zM0 12v1.500h9V12M11.500 0v14M10.500 5h2" strokeWidth="1.200" /></Icon></TaskItem>
        <TaskItem $top={5}>
          <Icon w={20} h={20}>
            <circle cx="10" cy="10" r="10" fill="#1677c5" stroke="none" />
            <path d="M0 9Q1 0 10 0t10 9q0 4-5 4-3 0-2-3 0-4-5-4T0 10z" fill="#45bf78" stroke="none" />
            <path d="M0 9Q2 0 10 0q5 0 7 3Q8 2 0 9z" fill="#35b6dc" stroke="none" />
            <path d="M13 10q-1 3 3 3l3-1q-1 3-4 4-6 0-6-4 0-3 3-3z" fill="#231927" stroke="none" />
          </Icon>
        </TaskItem>
        <TaskItem><Office c="#21a060" d="#107c41" l="X" /></TaskItem>
        <TaskItem><Office c="#3a8ee0" d="#185abd" l="W" /></TaskItem>
        <TaskItem><Office c="#2a9be2" d="#0f6cbd" l="O" /></TaskItem>
        <TaskItem>
          <Icon w={19} h={19}>
            <ellipse cx="9.500" cy="6" rx="8.500" ry="4.800" fill="#f3e9ec" stroke="#d9486a" transform="rotate(-15 9 6)" />
            <path d="M1 9q6 6 14 1v5q-8 3-13-1z" fill="#d9c4cc" stroke="none" />
            <path d="M9 17l6-6M17 17l-6-5" stroke="#4b93b8" strokeWidth="1.500" /><path d="M6 7l7-3" stroke="#d9486a" />
          </Icon>
        </TaskItem>
        <TaskItem $on $top={5}>
          <Icon w={20} h={19}>
            <circle cx="10.500" cy="9.500" r="9.500" fill="#e2603a" stroke="none" />
            <path d="M10.500 0a9.500 9.500 0 0 1 9.500 9.500h-9.500z" fill="#f59a7c" stroke="none" />
            <path d="M0 4h11v11H0z" fill="#c43e1c" stroke="none" />
            <text x="5.500" y="12.800" fontSize="9" fontWeight="700" textAnchor="middle" fill="#fff" stroke="none" fontFamily="Open Sans">P</text>
          </Icon>
        </TaskItem>
        <TaskItem><Icon w={20} h={19}><path d="M14 0l6 2v15l-6 2z" fill="#9a62dc" stroke="none" /><path d="M14 4L2 14M14 15L2 5M1 5v9" stroke="#7c4cc4" strokeWidth="2.600" /></Icon></TaskItem>
        <TaskItem><Icon w={19} h={17}><path d="M4 1h15l-4 15H0z" fill="#4376cc" stroke="none" /><path d="M6 4l5 4.500L4 13M10 13h5" stroke="#fff" strokeWidth="1.700" /></Icon></TaskItem>
        <TaskItem>
          <Icon w={19} h={19}>
            <path d="M1 10h17v9H1z" fill="#8d8d94" stroke="none" />
            <circle cx="9.500" cy="9" r="8.500" fill="#f2f2f2" stroke="#b5b5b5" />
            <path d="M5 5.500l4.500 4L14 5.500" stroke="#222" strokeWidth="2.200" /><path d="M9.500 9v7" stroke="#d0312d" strokeWidth="1.800" />
          </Icon>
        </TaskItem>
        <TaskItem><Icon w={18} h={17}><path d="M0 1h7l1.500 2H18v14H0z" fill="#eeb73e" stroke="none" /><path d="M0 5h18v10H0z" fill="#fbd976" stroke="none" /><path d="M3 17v-6h12v6h-3v-3H6v3z" fill="#3f94d6" stroke="none" /></Icon></TaskItem>
        <TaskItem><Office c="#2a9be2" d="#0f6cbd" l="O" /></TaskItem>
        <TaskItem><Icon w={20} h={18}><path d="M4 1h16l-1 11q-1 4-5 4L0 17 1 5q0-4 3-4z" fill="#1c9a4c" stroke="none" /><path d="M3 9q3 4 8 0l3-4M5 14l3-2 3 2M13 2l1 3 4-1" stroke="#fff" strokeWidth="1.700" /><circle cx="7.500" cy="5.500" r="1.900" fill="#fff" stroke="none" /></Icon></TaskItem>
        <Tray>
          <Icon w={10} h={6}><path d="M.5 5L5 .8 9.500 5" strokeWidth="1.200" /></Icon>
          <Icon w={14} h={9} ml={14}><path d="M3 9Q0 9 0 6.500T3 4q1-4 4.500-4t4 3.500Q14 4 14 6.500T11.500 9z" fill="#e9e6ec" stroke="none" /></Icon>
          <Icon w={14} h={9} ml={11}><path d="M3.500 2h8.500v6H3.500zM13 4v2" strokeWidth="1.200" /><path d="M5 3.500h5v3H5z" fill="currentColor" stroke="none" /><path d="M0 0h5v4H0z" fill="#ddd" stroke="none" /></Icon>
          <Icon w={13} h={11} ml={10}><path d="M.5 3.500H3L6 .5v10l-3-3H.5zM8 3.500q1.500 2 0 4" /><path d="M10 2q2.500 3.500 0 7M12 1q3 4.500 0 9" opacity=".5" /></Icon>
          <Icon w={14} h={11} ml={12}><path d="M3 2h10.500v6H4M6 10.500h5M8.500 8v2.500M.5.5h3v4h-3zM2 4.500V9" strokeWidth="1.100" /></Icon>
          <Txt $ml={8} $s={11.500}>英</Txt>
          <Icon w={12} h={12} ml={11}><path d="M0 0h12v12H0z" fill="#f2f2f2" stroke="none" /><text x="6" y="10" fontSize="10.500" fontWeight="700" textAnchor="middle" fill="#261b36" stroke="none" fontFamily="Noto Sans CJK SC">拼</text></Icon>
          <Clock><div>9:21</div><div>2021-03-01</div></Clock>
          <Icon w={13} h={13} ml={10}><path d="M0 0h12v9H6l-3 3V9H0z" fill="#f2f2f2" stroke="none" /><path d="M2 3h8M2 5.500h6" stroke="#261b36" /><circle cx="10" cy="9" r="2.500" fill="#261b36" /></Icon>
          <Spring $w={19} />
        </Tray>
      </Taskbar>

      <ChatWindow />
    </Screen>
  );
}
